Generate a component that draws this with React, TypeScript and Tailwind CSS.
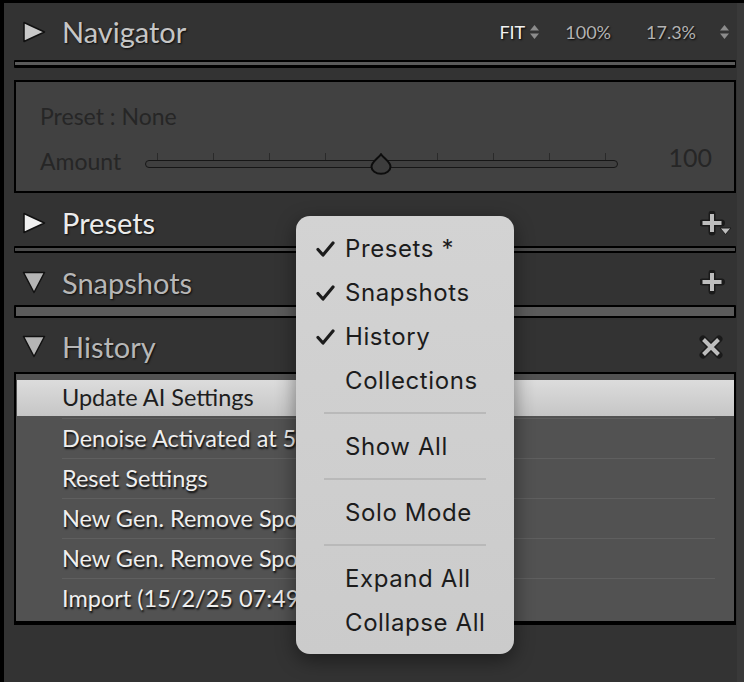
import type { ReactNode } from "react"

const panelFont = { fontFamily: "Lato, 'Noto Sans', sans-serif" }
const menuFont = { fontFamily: "Inter, 'Noto Sans', sans-serif" }

const RightTriangle = ({ color }: { color: string }) => (
  <svg width="24" height="22" viewBox="0 0 24 22">
    <polygon points="2,1.5 22.5,11 2,20.5" fill={color} stroke="#111" strokeWidth="1.5" strokeLinejoin="round" />
  </svg>
)

const DownTriangle = ({ color }: { color: string }) => (
  <svg width="24" height="23" viewBox="0 0 24 23">
    <polygon points="1.5,1.5 22.5,1.5 12,21.5" fill={color} stroke="#111" strokeWidth="1.5" strokeLinejoin="round" />
  </svg>
)

const UpDown = ({ color }: { color: string }) => (
  <svg width="11" height="16" viewBox="0 0 11 16">
    <polygon points="1,6.5 5.5,1 10,6.5" fill={color} />
    <polygon points="1,9.5 5.5,15 10,9.5" fill={color} />
  </svg>
)

const PlusIcon = ({ withMenu }: { withMenu?: boolean }) => (
  <svg width="32" height="26" viewBox="0 0 32 26">
    <path d="M12 3 V21 M2.5 12 H21.5" stroke="#1a1a1a" strokeWidth="7" strokeLinecap="round" />
    <path d="M12 3 V21 M2.5 12 H21.5" stroke="#bdbdbd" strokeWidth="4" strokeLinecap="butt" />
    {withMenu && <polygon points="20,17 31,17 25.5,23.5" fill="#bdbdbd" stroke="#1a1a1a" strokeWidth="1" />}
  </svg>
)

const CloseIcon = () => (
  <svg width="24" height="24" viewBox="0 0 24 24">
    <path d="M4 4 L20 20 M20 4 L4 20" stroke="#1a1a1a" strokeWidth="7" strokeLinecap="round" />
    <path d="M4.5 4.5 L19.5 19.5 M19.5 4.5 L4.5 19.5" stroke="#bdbdbd" strokeWidth="4" />
  </svg>
)

const Check = () => (
  <svg width="19" height="16" viewBox="0 0 19 16">
    <path d="M2 8.5 L7 14 L17 2" fill="none" stroke="#1c1c1c" strokeWidth="3.2" strokeLinecap="round" strokeLinejoin="round" />
  </svg>
)

const Thumb = () => (
  <svg width="24" height="22" viewBox="0 0 24 22">
    <path
      d="M12 1.2 C 9 5.5, 2.5 9, 2.5 13.8 A 9.5 7 0 0 0 21.5 13.8 C 21.5 9, 15 5.5, 12 1.2 Z"
      fill="#3d3d3d"
      stroke="#0d0d0d"
      strokeWidth="2"
    />
  </svg>
)

const Header = ({
  icon,
  title,
  color,
  className,
  right,
}: {
  icon: ReactNode
  title: string
  color: string
  className: string
  right?: ReactNode
}) => (
  <div className={`flex items-center ${className}`}>
    <div className="ml-[8px] flex w-[40px] items-center">{icon}</div>
    <span
      className="text-[29px] leading-none [text-shadow:1px_1px_2px_rgba(0,0,0,0.8)]"
      style={{ ...panelFont, color }}
    >
      {title}
    </span>
    <div className="ml-auto flex items-center">{right}</div>
  </div>
)

const Bar = ({ className }: { className: string }) => (
  <div className={`w-full rounded-[1px] border-black ${className}`} />
)

const ticks = [12, 68, 124, 180, 292, 348, 404, 460]

const historyRows = [
  "Denoise Activated at 5",
  "Reset Settings",
  "New Gen. Remove Spo",
  "New Gen. Remove Spo",
  "Import (15/2/25 07:49:1",
]

type MenuEntry = { label: string; checked?: boolean } | "sep"

const menuEntries: MenuEntry[] = [
  { label: "Presets *", checked: true },
  { label: "Snapshots", checked: true },
  { label: "History", checked: true },
  { label: "Collections" },
  "sep",
  { label: "Show All" },
  "sep",
  { label: "Solo Mode" },
  "sep",
  { label: "Expand All" },
  { label: "Collapse All" },
]

const App = () => {
  return (
    <div className="relative flex h-[682px] w-[744px] overflow-hidden border-t-[3px] border-black bg-[#333333]">
      <div className="w-[4px] shrink-0 bg-black" />

      <div className="flex w-[722px] shrink-0 flex-col pl-[10px] box-content">
        {/* Navigator */}
        <Header
          className="h-[57px]"
          title="Navigator"
          color="#c6c6c6"
          icon={<RightTriangle color="#c9c9c9" />}
          right={
            <div
              className="flex items-center text-[18px] leading-none [text-shadow:1px_1px_2px_rgba(0,0,0,0.9)]"
              style={panelFont}
            >
              <span className="text-[#f2f2f2]">FIT</span>
              <span className="ml-[4px]">
                <UpDown color="#8c8c8c" />
              </span>
              <span className="ml-[25px] text-[#b3b3b3]">100%</span>
              <span className="ml-[35px] text-[#b3b3b3]">17.3%</span>
              <span className="ml-[23px] mr-[6px]">
                <UpDown color="#8c8c8c" />
              </span>
            </div>
          }
        />
        <Bar className="h-[8px] border-t-2 border-b-[3px] border-x bg-[#5a5a5a]" />

        {/* Preset amount */}
        <div className="mt-[12px] h-[113px] border-2 border-black bg-[#414141] pl-[24px] pr-[22px] pt-[20px]" style={panelFont}>
          <div className="flex h-[28px] items-center text-[23px] leading-none text-[#262626]">Preset : None</div>
          <div className="mt-[17px] flex h-[28px] items-center">
            <span className="w-[105px] text-[23px] leading-none text-[#262626]">Amount</span>
            <div className="relative h-[28px] w-[473px]">
              {ticks.map((t) => (
                <div key={t} className="absolute top-[6px] h-[7px] w-px bg-[#2a2a2a]" style={{ left: t }} />
              ))}
              <div className="absolute left-0 right-0 top-[13px] h-[8px] rounded-full border-[1.5px] border-[#161616] bg-[#3f3f3f]" />
              <div className="absolute left-[224px] top-[6px]">
                <Thumb />
              </div>
            </div>
            <span className="mb-[8px] ml-auto text-[25px] leading-none text-[#262626]">100</span>
          </div>
        </div>

        {/* Presets */}
        <Header
          className="h-[53px] pt-[6px]"
          title="Presets"
          color="#ebebeb"
          icon={<RightTriangle color="#f0f0f0" />}
          right={
            <div className="mr-[4px] mt-[2px]">
              <PlusIcon withMenu />
            </div>
          }
        />
        <Bar className="h-[7px] border-t-2 border-b-2 border-x bg-[#4b4b4b]" />

        {/* Snapshots */}
        <Header
          className="h-[52px] pt-[6px]"
          title="Snapshots"
          color="#b7b7b7"
          icon={<DownTriangle color="#b5b5b5" />}
          right={
            <div className="mr-[4px] mt-[2px]">
              <PlusIcon />
            </div>
          }
        />
        <Bar className="h-[13px] border-2 bg-[#5b5b5b]" />

        {/* History */}
        <Header
          className="h-[54px] pt-[2px]"
          title="History"
          color="#b7b7b7"
          icon={<DownTriangle color="#b5b5b5" />}
          right={
            <div className="mr-[13px] mt-[2px]">
              <CloseIcon />
            </div>
          }
        />
        <div
          className="border-x-2 border-t-2 border-b-[4px] border-black bg-[#525252] pb-[3px] pl-px pt-[6px]"
          style={panelFont}
        >
          <div className="flex h-[36px] items-center bg-[linear-gradient(#dcdcdc,#c6c6c6)] pl-[45px] text-[23.5px] leading-none text-[#1e1e1e]">
            Update AI Settings
          </div>
          <div className="mt-[2px]">
            {historyRows.map((row, i) => (
              <div
                key={i}
                className="ml-[45px] mr-[19px] flex h-[40px] items-center overflow-hidden whitespace-nowrap border-t border-[#5f5f5f] text-[23.5px] leading-none text-[#efefef] [text-shadow:1px_2px_2px_rgba(0,0,0,0.9)]"
              >
                {row}
              </div>
            ))}
          </div>
        </div>
      </div>

      <div className="ml-px w-[7px] shrink-0 bg-[#393939]" />

      {/* Context menu */}
      <div
        className="absolute left-[296px] top-[213px] h-[438px] w-[218px] rounded-[14px] bg-[linear-gradient(#d3d3d3,#cbcbcb)] pb-[9px] pt-[11px] shadow-[0_6px_20px_rgba(0,0,0,0.45)]"
        style={menuFont}
      >
        {menuEntries.map((entry, i) =>
          entry === "sep" ? (
            <div key={i} className="mx-[28px] mb-[11px] mt-[9px] h-[2px] bg-[#b9b9b9]" />
          ) : (
            <div key={i} className="flex h-[44px] items-center pl-[20px] text-[24px] leading-none tracking-[0.6px] text-[#1c1c1c]">
              <span className="flex w-[29px] items-center">{entry.checked && <Check />}</span>
              {entry.label}
            </div>
          )
        )}
      </div>
    </div>
  )
}

export default App
